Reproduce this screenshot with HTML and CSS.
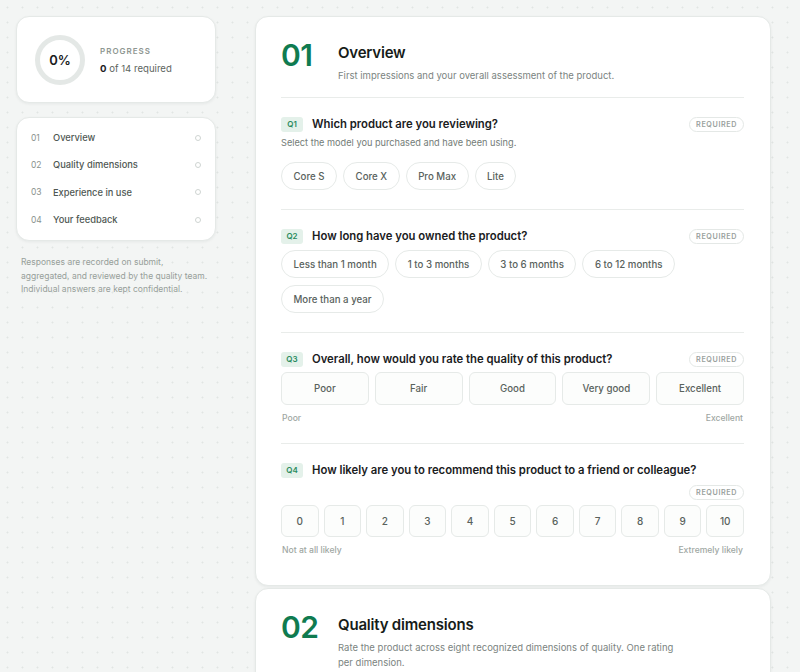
FILE: index.html
```html
<!DOCTYPE html>
<html lang="en">
<head>
<meta charset="utf-8">
<title>Product quality review</title>
<link rel="stylesheet" href="styles.css">
</head>
<body>
<div class="layout">
  <aside class="side">
    <div class="card progress">
      <div class="ring"><span>0%</span></div>
      <div class="progress-text">
        <div class="eyebrow">PROGRESS</div>
        <div class="count"><b>0</b> of 14 required</div>
      </div>
    </div>
    <nav class="card nav">
      <a class="nav-item"><span class="nav-num">01</span><span class="nav-label">Overview</span><span class="nav-dot"></span></a>
      <a class="nav-item"><span class="nav-num">02</span><span class="nav-label">Quality dimensions</span><span class="nav-dot"></span></a>
      <a class="nav-item"><span class="nav-num">03</span><span class="nav-label">Experience in use</span><span class="nav-dot"></span></a>
      <a class="nav-item"><span class="nav-num">04</span><span class="nav-label">Your feedback</span><span class="nav-dot"></span></a>
    </nav>
    <p class="note">Responses are recorded on submit, aggregated, and reviewed by the quality team. Individual answers are kept confidential.</p>
  </aside>

  <main class="main">
    <section class="card section">
      <header class="sec-head">
        <div class="sec-num">01</div>
        <div class="sec-titles">
          <h2 class="sec-title">Overview</h2>
          <p class="sec-desc">First impressions and your overall assessment of the product.</p>
        </div>
      </header>

      <div class="question">
        <div class="q-row">
          <div class="q-main"><span class="q-badge">Q1</span><span class="q-text">Which product are you reviewing?</span></div>
          <span class="req">REQUIRED</span>
        </div>
        <p class="q-help">Select the model you purchased and have been using.</p>
        <div class="chips">
          <button class="chip">Core S</button>
          <button class="chip">Core X</button>
          <button class="chip">Pro Max</button>
          <button class="chip">Lite</button>
        </div>
      </div>

      <div class="question">
        <div class="q-row">
          <div class="q-main"><span class="q-badge">Q2</span><span class="q-text">How long have you owned the product?</span></div>
          <span class="req">REQUIRED</span>
        </div>
        <div class="chips">
          <button class="chip">Less than 1 month</button>
          <button class="chip">1 to 3 months</button>
          <button class="chip">3 to 6 months</button>
          <button class="chip">6 to 12 months</button>
          <button class="chip">More than a year</button>
        </div>
      </div>

      <div class="question">
        <div class="q-row">
          <div class="q-main"><span class="q-badge">Q3</span><span class="q-text">Overall, how would you rate the quality of this product?</span></div>
          <span class="req">REQUIRED</span>
        </div>
        <div class="rating">
          <button class="rate">Poor</button>
          <button class="rate">Fair</button>
          <button class="rate">Good</button>
          <button class="rate">Very good</button>
          <button class="rate">Excellent</button>
        </div>
        <div class="scale"><span>Poor</span><span>Excellent</span></div>
      </div>

      <div class="question">
        <div class="q-row">
          <div class="q-main"><span class="q-badge">Q4</span><span class="q-text">How likely are you to recommend this product to a friend or colleague?</span></div>
          <span class="req">REQUIRED</span>
        </div>
        <div class="nps">
          <button class="num">0</button>
          <button class="num">1</button>
          <button class="num">2</button>
          <button class="num">3</button>
          <button class="num">4</button>
          <button class="num">5</button>
          <button class="num">6</button>
          <button class="num">7</button>
          <button class="num">8</button>
          <button class="num">9</button>
          <button class="num">10</button>
        </div>
        <div class="scale"><span>Not at all likely</span><span>Extremely likely</span></div>
      </div>
    </section>

    <section class="card section">
      <header class="sec-head">
        <div class="sec-num">02</div>
        <div class="sec-titles">
          <h2 class="sec-title">Quality dimensions</h2>
          <p class="sec-desc narrow">Rate the product across eight recognized dimensions of quality. One rating per dimension.</p>
        </div>
      </header>
    </section>
  </main>
</div>
</body>
</html>
```

FILE: styles.css
```css
* { box-sizing: border-box; }
html, body { margin: 0; }
body {
  font-family: Inter, "Noto Sans", "Liberation Sans", sans-serif;
  color: #1d2320;
  background-color: #f3f5f4;
  background-image: radial-gradient(circle, #e1e5e3 0.8px, transparent 1.2px);
  background-size: 15px 15px;
  background-position: 0 0;
  padding: 16px;
  height: 672px;
  overflow: hidden;
}
.layout {
  display: grid;
  grid-template-columns: 200px 516px;
  column-gap: 39px;
  align-items: start;
}
.card {
  background: #fff;
  border: 1px solid #e5e9e7;
  border-radius: 13px;
  box-shadow: 0 1px 3px rgba(20, 40, 30, 0.06);
}
/* side */
.progress {
  display: flex;
  align-items: center;
  gap: 15px;
  padding: 18px 18px;
  height: 87px;
}
.ring {
  width: 50px; height: 50px;
  border-radius: 50%;
  border: 5px solid #e4e8e6;
  display: flex; align-items: center; justify-content: center;
  font-size: 13px; font-weight: 600; color: #1a201d;
  flex: none;
}
.eyebrow {
  font-size: 8px; letter-spacing: 1px; font-weight: 600; color: #8f9792;
  line-height: 12px;
  margin-top: 1px;
}
.count { font-size: 9.6px; color: #5c6560; margin-top: 5px; line-height: 13px; }
.count b { color: #1a201d; font-weight: 700; }

.nav {
  margin-top: 14px;
  padding: 6px 14px 7px 14px;
  display: flex; flex-direction: column;
}
.nav-item {
  display: flex; align-items: center;
  height: 27.3px;
  color: #4f5853;
}
.nav-num { width: 22px; font-size: 8.5px; color: #8a928d; }
.nav-label { font-size: 9.3px; font-weight: 500; flex: 1; }
.nav-dot {
  width: 6px; height: 6px; border-radius: 50%;
  border: 1px solid #cfd5d2;
}
.note {
  margin: 15px 0 0 0;
  padding: 0 5px;
  font-size: 8.5px;
  line-height: 13.5px;
  color: #979f9a;
}

/* main */
.main { display: flex; flex-direction: column; gap: 2px; }
.section { padding: 26px 26px 29px 25px; }
.sec-head {
  display: flex;
  align-items: flex-start;
  padding-bottom: 14px;
}
.sec-num {
  width: 57px;
  flex: none;
  font-size: 30px;
  line-height: 30px;
  font-weight: 600;
  color: #0f7b50;
  margin-top: -3px;
  letter-spacing: -0.5px;
}
.sec-title {
  margin: 0;
  font-size: 15px;
  line-height: 20px;
  font-weight: 600;
  letter-spacing: -0.2px;
  color: #161c19;
}
.sec-desc {
  margin: 5px 0 0 0;
  font-size: 9.5px;
  line-height: 15px;
  color: #7b847f;
}
.sec-desc.narrow { max-width: 345px; }

.question {
  border-top: 1px solid #e9ecea;
  padding: 18px 0 19px 0;
}
.question:last-child { padding-bottom: 0; }
.q-row {
  display: flex;
  flex-wrap: wrap;
  align-items: center;
  gap: 7px 12px;
  min-height: 16px;
}
.q-main { display: flex; align-items: center; gap: 9px; }
.q-badge {
  display: inline-flex; align-items: center; justify-content: center;
  width: 22px; height: 15px;
  border-radius: 3px;
  background: #e4f1ea;
  color: #2a8b5e;
  font-size: 8px;
  font-weight: 600;
}
.q-text { font-size: 11.3px; line-height: 16px; font-weight: 600; color: #1a201d; }
.req {
  margin-left: auto;
  height: 15px;
  padding: 0 6px;
  display: inline-flex; align-items: center;
  border: 1px solid #e4e8e6;
  border-radius: 999px;
  font-size: 7.2px;
  font-weight: 600;
  letter-spacing: 0.6px;
  color: #9aa19d;
}
.q-help {
  margin: 3px 0 0 0;
  font-size: 9.2px;
  line-height: 15px;
  color: #737c77;
}
.q-help + .chips { margin-top: 12px; }
.chips {
  display: flex; flex-wrap: wrap;
  gap: 7px 6px;
  margin-top: 6px;
}
button {
  font-family: inherit;
  cursor: pointer;
}
.chip {
  height: 28px;
  padding: 0 11.5px;
  border: 1px solid #e6eae8;
  border-radius: 999px;
  background: #fff;
  font-size: 9.7px;
  color: #59625d;
  font-weight: 500;
}
.rating {
  display: grid;
  grid-template-columns: repeat(5, 1fr);
  gap: 6px;
  margin-top: 5px;
}
.rate, .num {
  height: 33px;
  border: 1px solid #e6eae8;
  border-radius: 6px;
  background: #fcfdfc;
  font-size: 9.7px;
  font-weight: 500;
  color: #59625d;
}
.nps {
  display: grid;
  grid-template-columns: repeat(11, 1fr);
  gap: 5px;
  margin-top: 5px;
}
.num { height: 32px; font-size: 10px; }
.scale {
  display: flex; justify-content: space-between;
  margin-top: 7px;
  padding: 0 1px;
  font-size: 8.6px;
  line-height: 12px;
  font-weight: 500;
  color: #a0a7a3;
}
```
